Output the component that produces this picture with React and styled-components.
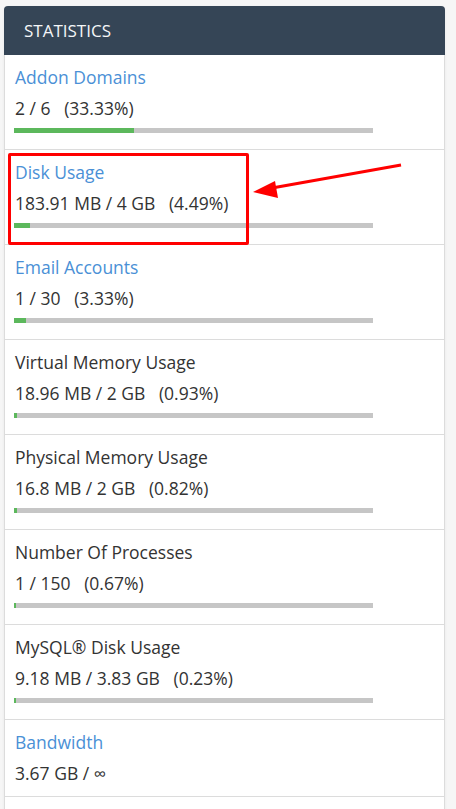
import styled, { createGlobalStyle } from "styled-components";

const GlobalStyle = createGlobalStyle`
  html, body {
    margin: 0;
    padding: 0;
    background: #f6f6f6;
  }
  body {
    font-family: "Open Sans", "Liberation Sans", sans-serif;
    color: #333;
  }
`;

const Page = styled.div`
  position: relative;
  padding: 6px 11px 0 4px;
  height: 809px;
  overflow: hidden;
  box-sizing: border-box;
`;

const Panel = styled.section`
  background: #fff;
  border: 1px solid #dcdcdc;
  border-top: none;
  border-radius: 4px 4px 0 0;
  box-shadow: 0 1px 3px rgba(0, 0, 0, 0.06);
`;

const Header = styled.header`
  display: flex;
  align-items: center;
  height: 49px;
  padding: 0 20px;
  margin: 0 -1px;
  background: #354556;
  border-radius: 4px 4px 0 0;
  color: #f4f6f8;
  font-size: 17px;
  text-transform: uppercase;
`;

const Row = styled.div`
  display: flex;
  flex-direction: column;
  padding: 11px 9px ${(p) => (p.$bar ? "16px" : "12px")};
  border-bottom: 1px solid #dcdcdc;
`;

const Title = styled.div`
  font-size: 17.5px;
  line-height: 22px;
  margin-left: 1px;
  color: ${(p) => (p.$link ? "#4a90d6" : "#333")};
`;

const Value = styled.div`
  margin: 9px 0 0 1px;
  font-size: 17.5px;
  line-height: 22px;
  white-space: pre;
  color: #333;
`;

const Track = styled.div`
  width: 359px;
  height: 5px;
  margin-top: 9px;
  background: #c6c6c6;
`;

const Fill = styled.div`
  height: 100%;
  min-width: 2px;
  background: #5cb85c;
`;

const Filler = styled.div`
  height: 40px;
`;

const Callout = styled.div`
  position: absolute;
  left: 8px;
  top: 153px;
  width: 235px;
  height: 86px;
  border: 3px solid #f00;
  border-radius: 2px;
`;

const Arrow = styled.svg`
  position: absolute;
  left: 250px;
  top: 160px;
  width: 160px;
  height: 45px;
`;

const stats = [
  { title: "Addon Domains", link: true, value: "2 / 6   (33.33%)", pct: 33.33 },
  { title: "Disk Usage", link: true, value: "183.91 MB / 4 GB   (4.49%)", pct: 4.49 },
  { title: "Email Accounts", link: true, value: "1 / 30   (3.33%)", pct: 3.33 },
  { title: "Virtual Memory Usage", value: "18.96 MB / 2 GB   (0.93%)", pct: 0.93 },
  { title: "Physical Memory Usage", value: "16.8 MB / 2 GB   (0.82%)", pct: 0.82 },
  { title: "Number Of Processes", value: "1 / 150   (0.67%)", pct: 0.67 },
  { title: "MySQL® Disk Usage", value: "9.18 MB / 3.83 GB   (0.23%)", pct: 0.23 },
  { title: "Bandwidth", link: true, value: "3.67 GB / ∞" },
];

export default function App() {
  return (
    <>
      <GlobalStyle />
      <Page>
        <Panel>
          <Header>Statistics</Header>
          {stats.map((s) => (
            <Row key={s.title} $bar={s.pct !== undefined}>
              <Title $link={s.link}>{s.title}</Title>
              <Value>{s.value}</Value>
              {s.pct !== undefined && (
                <Track>
                  <Fill style={{ width: `${s.pct}%` }} />
                </Track>
              )}
            </Row>
          ))}
          <Filler />
        </Panel>
        <Callout />
        <Arrow viewBox="0 0 160 45">
          <line x1="151" y1="5" x2="22" y2="28" stroke="#f00" strokeWidth="3" />
          <polygon points="3,32 25,21 28,38" fill="#f00" />
        </Arrow>
      </Page>
    </>
  );
}
